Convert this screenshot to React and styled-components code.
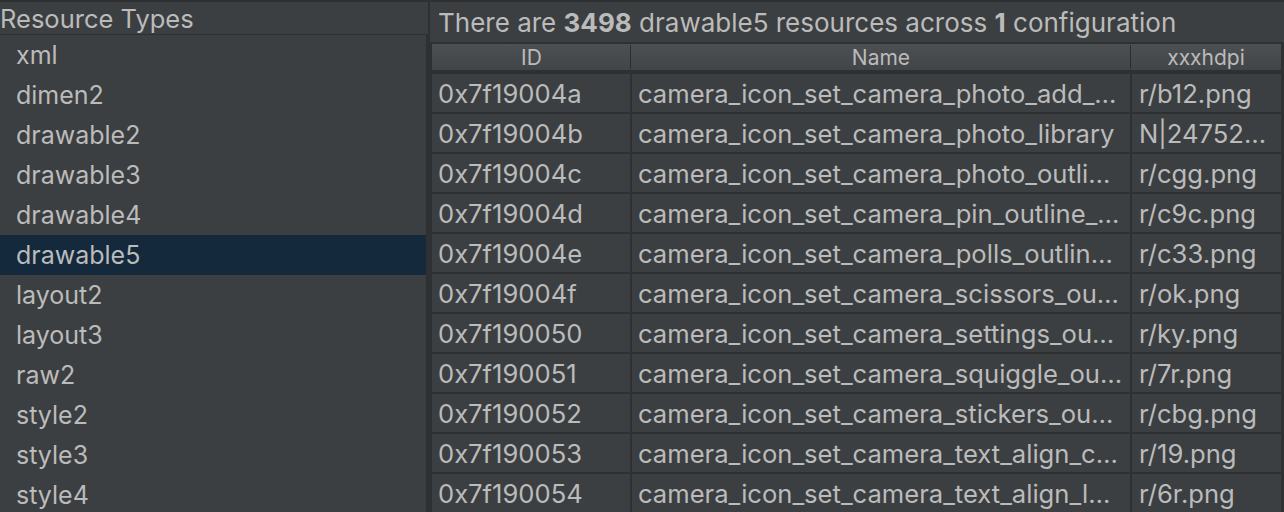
import React from 'react';
import styled, { createGlobalStyle } from 'styled-components';

const GlobalStyle = createGlobalStyle`
  html, body {
    margin: 0;
    padding: 0;
    background: #2e3032;
  }
  body {
    font-family: 'Inter', 'Liberation Sans', sans-serif;
    color: #bbbbbb;
  }
`;

const types = ['xml', 'dimen2', 'drawable2', 'drawable3', 'drawable4', 'drawable5', 'layout2', 'layout3', 'raw2', 'style2', 'style3', 'style4'];

const rows = [
  ['0x7f19004a', 'camera_icon_set_camera_photo_add_…', 'r/b12.png'],
  ['0x7f19004b', 'camera_icon_set_camera_photo_library', 'N|24752…'],
  ['0x7f19004c', 'camera_icon_set_camera_photo_outli…', 'r/cgg.png'],
  ['0x7f19004d', 'camera_icon_set_camera_pin_outline_…', 'r/c9c.png'],
  ['0x7f19004e', 'camera_icon_set_camera_polls_outlin…', 'r/c33.png'],
  ['0x7f19004f', 'camera_icon_set_camera_scissors_ou…', 'r/ok.png'],
  ['0x7f190050', 'camera_icon_set_camera_settings_ou…', 'r/ky.png'],
  ['0x7f190051', 'camera_icon_set_camera_squiggle_ou…', 'r/7r.png'],
  ['0x7f190052', 'camera_icon_set_camera_stickers_ou…', 'r/cbg.png'],
  ['0x7f190053', 'camera_icon_set_camera_text_align_c…', 'r/19.png'],
  ['0x7f190054', 'camera_icon_set_camera_text_align_l…', 'r/6r.png'],
];

const Window = styled.div`
  display: flex;
  height: 512px;
  padding-top: 2px;
  box-sizing: border-box;
  overflow: hidden;
`;

const Sidebar = styled.div`
  width: 428px;
  display: flex;
  flex-direction: column;
`;

const SidebarTitle = styled.div`
  height: 32px;
  line-height: 34px;
  background: #3c3f41;
  font-size: 25.5px;
  white-space: nowrap;
  border-bottom: 1px solid #2e3032;
`;

const TypeList = styled.div`
  width: 426px;
  flex: 1;
  background: #3c3f41;
`;

const TypeItem = styled.div`
  height: 40px;
  line-height: 41px;
  padding-left: 16px;
  font-size: 25px;
  background: ${(p) => (p.$selected ? '#14293c' : 'transparent')};
`;

const Main = styled.div`
  flex: 1;
  margin-left: 2px;
  display: flex;
  flex-direction: column;
`;

const Summary = styled.div`
  height: 40px;
  line-height: 42px;
  padding-left: 8px;
  background: #3c3f41;
  font-size: 26px;
  white-space: nowrap;
  margin-bottom: 2px;

  b {
    font-weight: 700;
  }
`;

const Table = styled.div`
  margin: 0 3px 0 2px;
  display: flex;
  flex-direction: column;
`;

const HeaderRow = styled.div`
  display: grid;
  grid-template-columns: 199px 500px 1fr;
  height: 26px;
  background: linear-gradient(#4d5053, #424547);
  margin-bottom: 4px;
`;

const HeaderCell = styled.div`
  position: relative;
  text-align: center;
  font-size: 21px;
  line-height: 27px;
  color: #bbbbbb;

  &:not(:last-child)::after {
    content: '';
    position: absolute;
    right: 0;
    top: 1px;
    bottom: 2px;
    width: 1px;
    background: #2a2c2e;
  }
`;

const Body = styled.div`
  display: grid;
  grid-template-columns: 198px 498px 1fr;
  gap: 2px;
`;

const Cell = styled.div`
  height: 38px;
  line-height: 39px;
  background: #3c3f41;
  padding-left: ${(p) => (p.$pad ? p.$pad : 6)}px;
  font-size: 25.6px;
  white-space: nowrap;
  overflow: hidden;
`;

export default function App() {
  return (
    <>
      <GlobalStyle />
      <Window>
        <Sidebar>
          <SidebarTitle>Resource Types</SidebarTitle>
          <TypeList>
            {types.map((t) => (
              <TypeItem key={t} $selected={t === 'drawable5'}>
                {t}
              </TypeItem>
            ))}
          </TypeList>
        </Sidebar>
        <Main>
          <Summary>
            There are <b>3498</b> drawable5 resources across <b>1</b> configuration
          </Summary>
          <Table>
            <HeaderRow>
              <HeaderCell>ID</HeaderCell>
              <HeaderCell>Name</HeaderCell>
              <HeaderCell>xxxhdpi</HeaderCell>
            </HeaderRow>
            <Body>
              {rows.map((r) => (
                <React.Fragment key={r[0]}>
                  <Cell>{r[0]}</Cell>
                  <Cell>{r[1]}</Cell>
                  <Cell $pad={7}>{r[2]}</Cell>
                </React.Fragment>
              ))}
            </Body>
          </Table>
        </Main>
      </Window>
    </>
  );
}
